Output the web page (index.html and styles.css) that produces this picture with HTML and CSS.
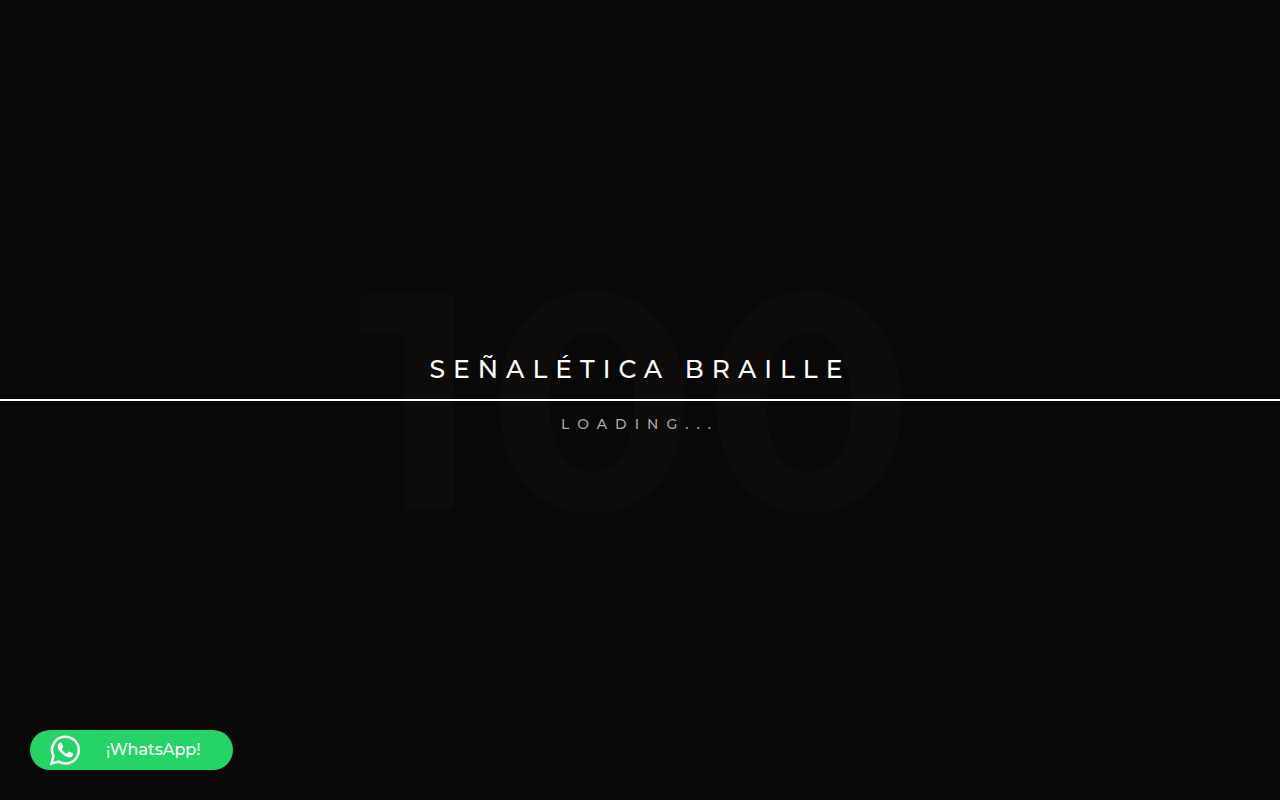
FILE: index.html
```html
<!DOCTYPE html>
<html lang="es">
    <head>
        <meta charset="UTF-8">
        <meta name="viewport" content="width=device-width, initial-scale=1">
        <title>Señalética Braille</title>
        <link rel="stylesheet" href="styles.css">
    </head>

    <body>
        <!-- Preloader -->
        <main class="preloader">
            <div class="preloader-top">
                <h1 class="preloader-title">SEÑALÉTICA BRAILLE</h1>
            </div>
            <div class="preloader-line"></div>
            <div class="preloader-bottom">
                <p class="preloader-text">LOADING...</p>
            </div>
            <div class="preloader-count">100</div>
        </main>

        <!-- WhatsApp button -->
        <a class="whatsapp" href="#">
            <svg class="whatsapp-icon" viewBox="0 0 30 30" aria-hidden="true">
                <path d="M1.5 28.5 3.5 21.2A13.4 13.4 0 1 1 8.6 26.6Z" fill="none" stroke="#fff" stroke-width="2.5" stroke-linejoin="miter"/>
                <path d="M10.7 7.5C9.5 7.3 7.7 9 7.7 11.2C7.7 13.4 9.2 15.8 11.5 18.1C14.2 20.8 17 22.5 19.3 22.5C21.4 22.5 23 21 23.1 19.2C23.2 18.5 22.8 18.2 22.3 17.9L19.6 16.7C19.1 16.5 18.7 16.6 18.4 17L17.3 18.4C17 18.8 16.6 18.8 16.1 18.5C14.2 17.5 12.9 16.1 12 14.5C11.8 14.1 11.8 13.8 12.1 13.5L13 12.4C13.2 12 13.2 11.7 13.1 11.3L12 8.4C11.8 7.8 11.4 7.5 10.7 7.5Z" fill="#fff"/>
            </svg>
            <span>¡WhatsApp!</span>
        </a>
    </body>
</html>
```

FILE: styles.css
```css
*{
    box-sizing: border-box;
}

body{
    margin: 0;
    font-family: Montserrat, Inter, "Liberation Sans", sans-serif;
    font-weight: 500;
    color: #fff;
    background-color: #080808;
}

/* Preloader */
.preloader{
    position: relative;
    display: flex;
    flex-direction: column;
    height: 100vh;
    text-align: center;
    letter-spacing: 8px;
}

.preloader-top,
.preloader-bottom{
    flex: 1;
    display: flex;
    justify-content: center;
    padding: 14px 0;
}

.preloader-top{
    align-items: flex-end;
}

.preloader-bottom{
    align-items: flex-start;
}

.preloader-line{
    height: 2px;
    background-color: #fff;
}

.preloader-title{
    margin: 0;
    font-size: 25px;
    line-height: 32px;
    font-weight: 500;
}

.preloader-text{
    margin: 0;
    font-size: 14px;
    line-height: 18px;
    color: #aaa;
}

/* Big counter drawn over the line */
.preloader-count{
    position: absolute;
    inset: 0;
    display: flex;
    justify-content: center;
    align-items: center;
    font-size: 308px;
    line-height: 1;
    font-weight: 700;
    color: rgba(190, 150, 90, 0.03);
    pointer-events: none;
}

/* WhatsApp button */
.whatsapp{
    position: fixed;
    left: 30px;
    bottom: 30px;
    display: flex;
    align-items: center;
    gap: 26px;
    height: 40px;
    padding: 0 32px 0 20px;
    border-radius: 20px;
    font-size: 16px;
    line-height: 20px;
    color: #fff;
    background-color: #25d366;
    text-decoration: none;
}

.whatsapp-icon{
    width: 30px;
    height: 30px;
}
```
